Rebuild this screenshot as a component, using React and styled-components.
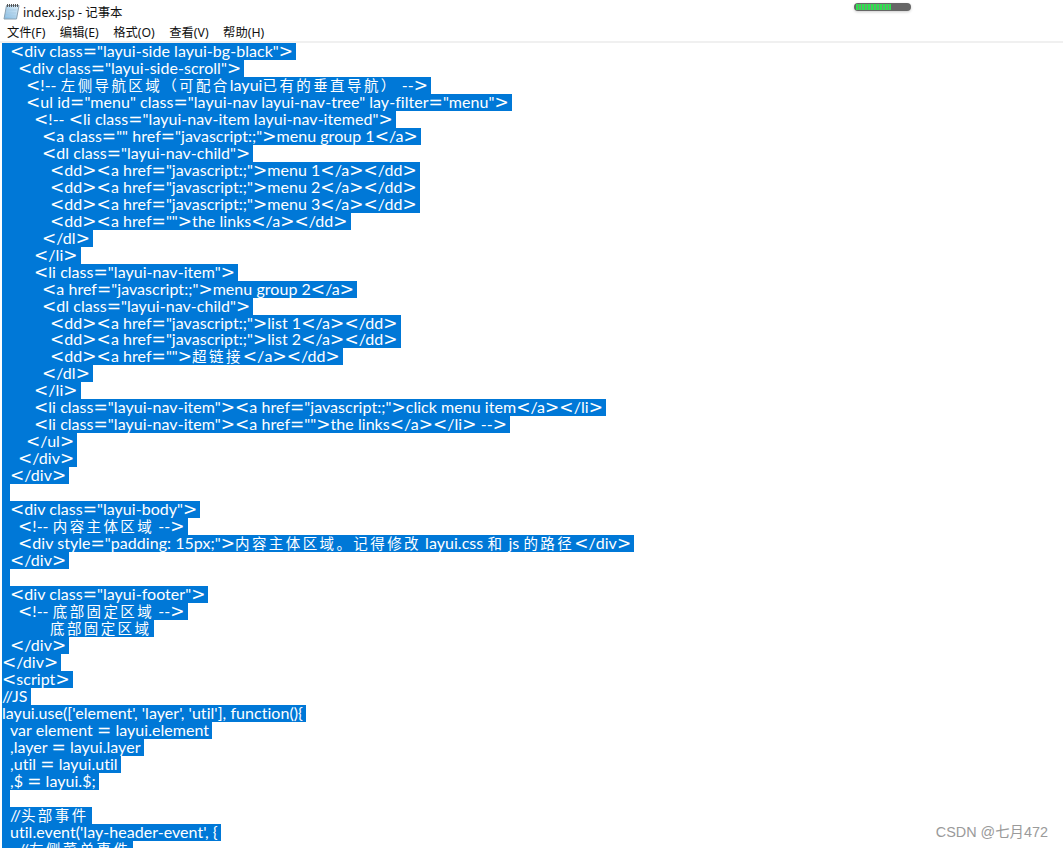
import React from "react";
import styled, { createGlobalStyle } from "styled-components";

const GlobalStyle = createGlobalStyle`
  html, body {
    margin: 0;
    padding: 0;
    background: #fff;
    overflow: hidden;
  }
`;

const Page = styled.div`
  position: relative;
  width: 1063px;
  height: 848px;
  overflow: hidden;
  background: #fff;
`;

const TitleBar = styled.div`
  display: flex;
  align-items: center;
  height: 23px;
  padding: 0 152px 0 3px;
  font-family: "Noto Sans", "Noto Sans CJK SC", sans-serif;
  font-size: 12.4px;
  color: #111;
`;

const TitleText = styled.span`
  margin-left: 3px;
`;

const Meter = styled.div`
  margin-left: auto;
  margin-bottom: 9px;
  width: 57px;
  height: 8px;
  padding: 1px 2px;
  box-sizing: border-box;
  border-radius: 4px;
  background: #666;
  box-shadow: 0 1px 3px rgba(0, 0, 0, 0.2);
`;

const MeterFill = styled.div`
  width: 35px;
  height: 6px;
  background: repeating-linear-gradient(90deg, #2fe04f 0 2px, #6f9a74 2px 3px);
`;

const MenuBar = styled.div`
  display: flex;
  gap: 14.5px;
  height: 18px;
  padding: 0 7px;
  align-items: center;
  border-bottom: 2px solid #f0f0f0;
  font-family: "Noto Sans", "Noto Sans CJK SC", sans-serif;
  font-size: 12.3px;
  color: #111;
`;

const Editor = styled.div`
  display: flex;
  flex-direction: column;
  align-items: flex-start;
  padding-left: 2px;
  font-family: "Lato", "Noto Sans CJK SC", sans-serif;
  font-size: 16px;
  letter-spacing: 0.04px;
  color: #fff;
`;

const Line = styled.div`
  height: 16.97px;
  line-height: 15px;
  padding-left: ${(p) => p.$indent * 8}px;
  padding-right: 3px;
  background: #0078d7;
  white-space: pre;

  &:empty {
    padding-right: 0;
  }
`;

const Cjk = styled.span`
  font-size: 14.5px;
  letter-spacing: 2.4px;
`;

/* the notepad font draws < > = much wider than Lato does */
const Wide = styled.span`
  font-family: "DejaVu Sans", sans-serif;
  font-size: 17px;
  line-height: 0;
`;

const Watermark = styled.div`
  position: absolute;
  right: 15px;
  bottom: 7px;
  font-family: "Liberation Sans", "Noto Sans CJK SC", sans-serif;
  font-size: 14.4px;
  color: #9a9a9a;
`;

const menus = ["文件(F)", "编辑(E)", "格式(O)", "查看(V)", "帮助(H)"];

const lines = [
  [1, '<div class="layui-side layui-bg-black">'],
  [2, '<div class="layui-side-scroll">'],
  [3, "<!-- 左侧导航区域（可配合layui已有的垂直导航） -->"],
  [3, '<ul id="menu" class="layui-nav layui-nav-tree" lay-filter="menu">'],
  [4, '<!-- <li class="layui-nav-item layui-nav-itemed">'],
  [5, '<a class="" href="javascript:;">menu group 1</a>'],
  [5, '<dl class="layui-nav-child">'],
  [6, '<dd><a href="javascript:;">menu 1</a></dd>'],
  [6, '<dd><a href="javascript:;">menu 2</a></dd>'],
  [6, '<dd><a href="javascript:;">menu 3</a></dd>'],
  [6, '<dd><a href="">the links</a></dd>'],
  [5, "</dl>"],
  [4, "</li>"],
  [4, '<li class="layui-nav-item">'],
  [5, '<a href="javascript:;">menu group 2</a>'],
  [5, '<dl class="layui-nav-child">'],
  [6, '<dd><a href="javascript:;">list 1</a></dd>'],
  [6, '<dd><a href="javascript:;">list 2</a></dd>'],
  [6, '<dd><a href="">超链接</a></dd>'],
  [5, "</dl>"],
  [4, "</li>"],
  [4, '<li class="layui-nav-item"><a href="javascript:;">click menu item</a></li>'],
  [4, '<li class="layui-nav-item"><a href="">the links</a></li> -->'],
  [3, "</ul>"],
  [2, "</div>"],
  [1, "</div>"],
  [1, ""],
  [1, '<div class="layui-body">'],
  [2, "<!-- 内容主体区域 -->"],
  [2, '<div style="padding: 15px;">内容主体区域。记得修改 layui.css 和 js 的路径</div>'],
  [1, "</div>"],
  [1, ""],
  [1, '<div class="layui-footer">'],
  [2, "<!-- 底部固定区域 -->"],
  [6, "底部固定区域"],
  [1, "</div>"],
  [0, "</div>"],
  [0, "<script>"],
  [0, "//JS"],
  [0, "layui.use(['element', 'layer', 'util'], function(){"],
  [1, "var element = layui.element"],
  [1, ",layer = layui.layer"],
  [1, ",util = layui.util"],
  [1, ",$ = layui.$;"],
  [1, ""],
  [1, "//头部事件"],
  [1, "util.event('lay-header-event', {"],
  [2, "//左侧菜单事件"],
];

// chinese runs and the wide symbols get their own spans, the rest stays plain text
function renderCode(text) {
  return text
    .split(/([\u3000-\u303f\u4e00-\u9fff\uff00-\uffef]+|[<>=])/)
    .map((part, i) => {
      if (i % 2 === 0) return part;
      if (/[<>=]/.test(part)) return <Wide key={i}>{part}</Wide>;
      return <Cjk key={i}>{part}</Cjk>;
    });
}

function NotepadIcon() {
  return (
    <svg width="17" height="17" viewBox="0 0 17 17">
      <defs>
        <linearGradient id="sheet" x1="0" y1="1" x2="1" y2="0">
          <stop offset="0" stopColor="#7fb8e2" />
          <stop offset="1" stopColor="#e2f0f9" />
        </linearGradient>
      </defs>
      <path d="M3.5 2.5 L16 2.5 L13.5 16 L1 16 Z" fill="url(#sheet)" stroke="#8aa0b0" strokeWidth="1" />
      <path d="M4.5 1 V4 M6.5 1 V4 M8.5 1 V4 M10.5 1 V4 M12.5 1 V4 M14.5 1 V4" stroke="#555" strokeWidth="1" />
      <path d="M3.8 7 H13.6 M3.2 10 H13 M2.7 13 H12.5" stroke="#a9cbe3" strokeWidth="1" />
    </svg>
  );
}

export default function App() {
  return (
    <Page>
      <GlobalStyle />
      <TitleBar>
        <NotepadIcon />
        <TitleText>index.jsp - 记事本</TitleText>
        <Meter>
          <MeterFill />
        </Meter>
      </TitleBar>
      <MenuBar>
        {menus.map((m) => (
          <span key={m}>{m}</span>
        ))}
      </MenuBar>
      <Editor>
        {lines.map(([indent, text], i) => (
          <Line key={i} $indent={indent}>
            {text ? renderCode(text) : null}
          </Line>
        ))}
      </Editor>
      <Watermark>CSDN @七月472</Watermark>
    </Page>
  );
}
